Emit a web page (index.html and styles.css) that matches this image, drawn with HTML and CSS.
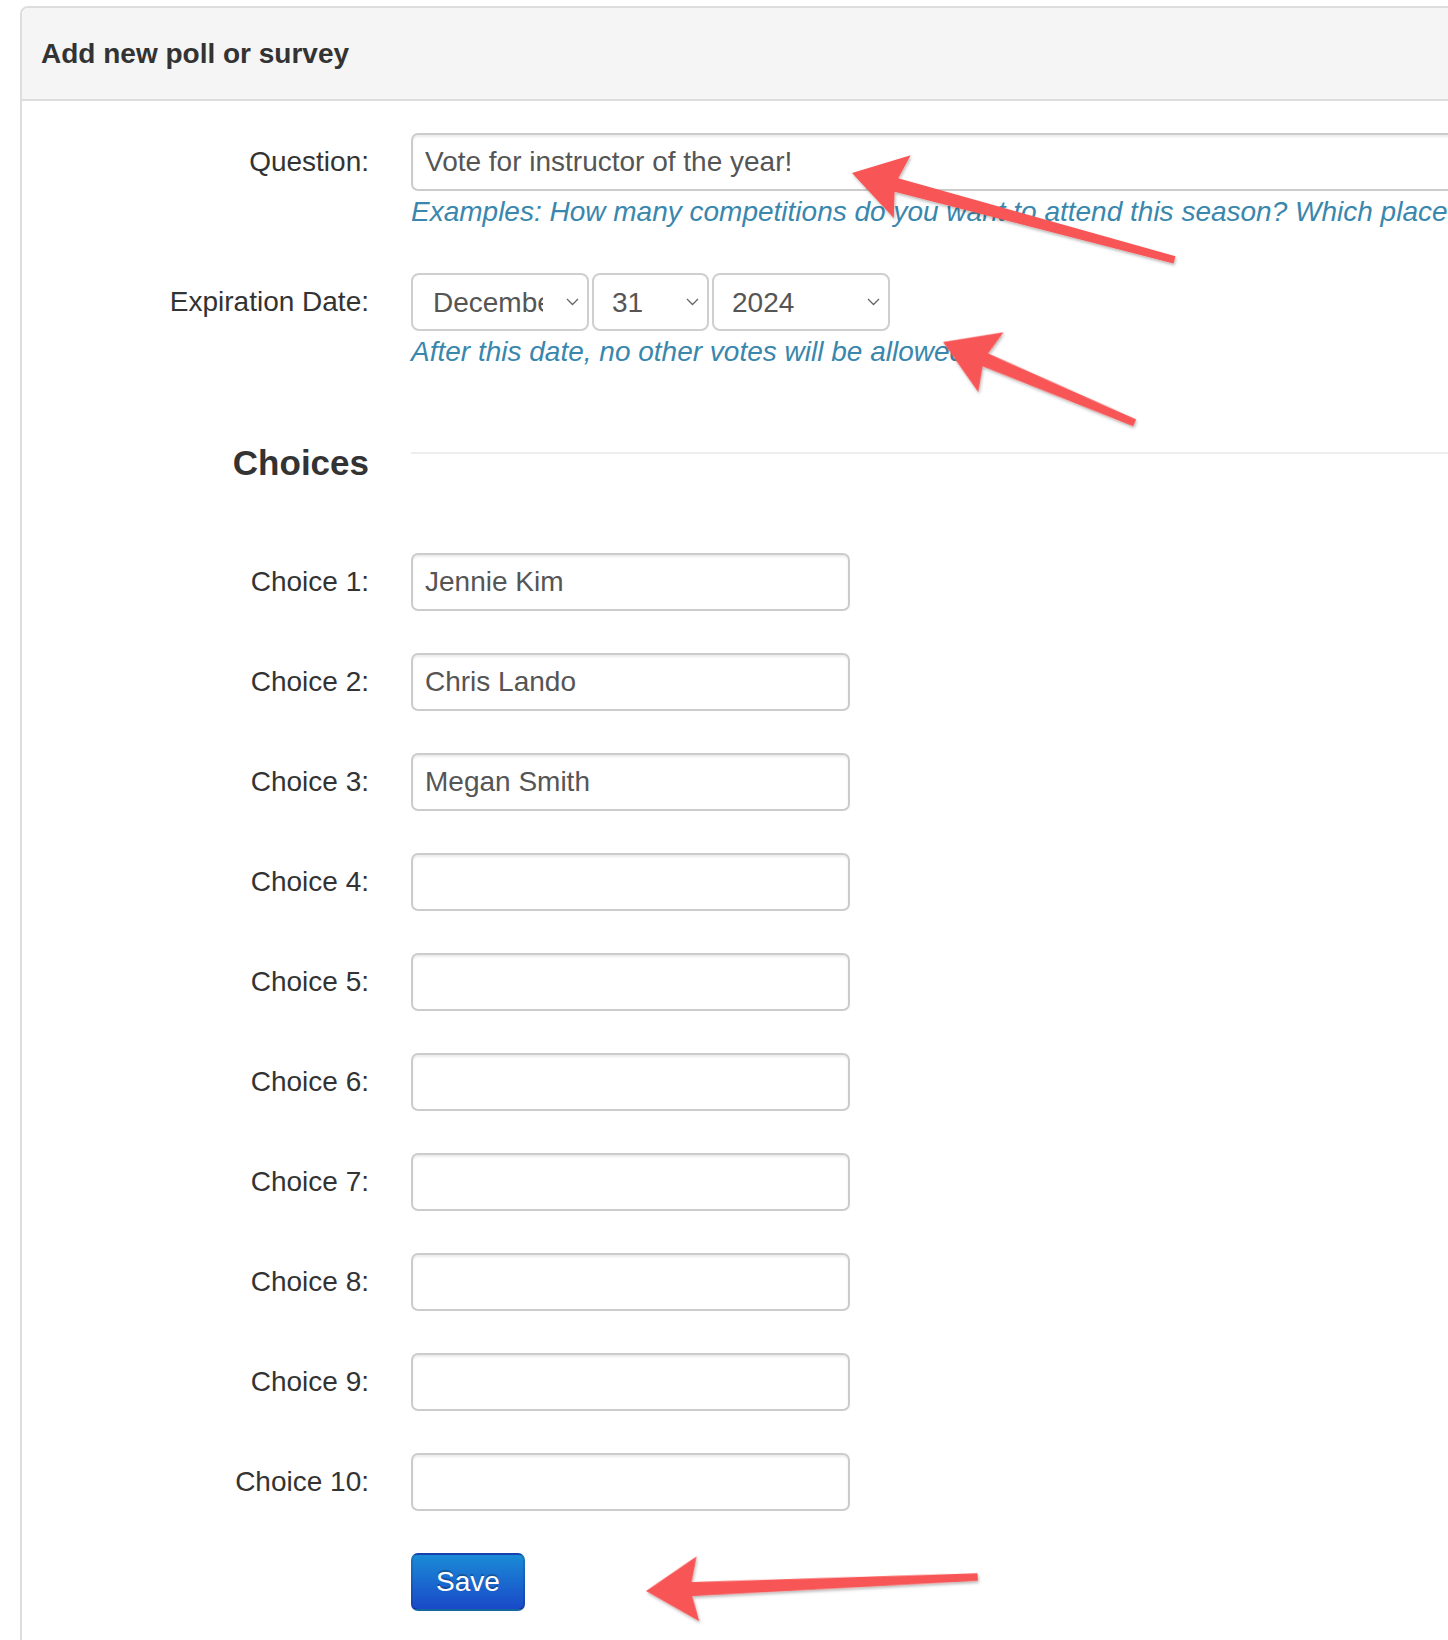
FILE: index.html
```html
<!DOCTYPE html>
<html lang="en">
<head>
    <meta charset="UTF-8">
    <meta name="viewport" content="width=device-width, initial-scale=1.0">
    <title>Add new poll or survey</title>
    <link rel="stylesheet" href="styles.css">
</head>
<body>

    <div class="page">
        <div class="panel">
            <div class="panel-heading">Add new poll or survey</div>

            <form class="panel-body" onsubmit="return false;">
                <div class="form-row field-group">
                    <label class="control-label" for="question">Question:</label>
                    <div class="controls">
                        <input type="text" id="question" class="input-full" value="Vote for instructor of the year!">
                        <p class="help">Examples: How many competitions do you want to attend this season? Which place should we travel to next?</p>
                    </div>
                </div>

                <div class="form-row expiry-group">
                    <label class="control-label" for="exp-month">Expiration Date:</label>
                    <div class="controls">
                        <div class="date-selects">
                            <div class="select-wrap month">
                                <select id="exp-month">
                                    <option>December</option>
                                </select>
                                <svg class="chevron" width="13" height="8" viewBox="0 0 13 8"><path d="M1 1 L6.5 6.5 L12 1" /></svg>
                            </div>
                            <div class="select-wrap day">
                                <select id="exp-day">
                                    <option>31</option>
                                </select>
                                <svg class="chevron" width="13" height="8" viewBox="0 0 13 8"><path d="M1 1 L6.5 6.5 L12 1" /></svg>
                            </div>
                            <div class="select-wrap year">
                                <select id="exp-year">
                                    <option>2024</option>
                                </select>
                                <svg class="chevron" width="13" height="8" viewBox="0 0 13 8"><path d="M1 1 L6.5 6.5 L12 1" /></svg>
                            </div>
                        </div>
                        <p class="help">After this date, no other votes will be allowed.</p>
                    </div>
                </div>

                <div class="form-row section-row">
                    <h4 class="section-title">Choices</h4>
                    <div class="controls">
                        <hr class="section-rule">
                    </div>
                </div>

                <div class="form-row choice-row">
                    <label class="control-label" for="choice-1">Choice 1:</label>
                    <div class="controls"><input type="text" id="choice-1" class="input-choice" value="Jennie Kim"></div>
                </div>
                <div class="form-row choice-row">
                    <label class="control-label" for="choice-2">Choice 2:</label>
                    <div class="controls"><input type="text" id="choice-2" class="input-choice" value="Chris Lando"></div>
                </div>
                <div class="form-row choice-row">
                    <label class="control-label" for="choice-3">Choice 3:</label>
                    <div class="controls"><input type="text" id="choice-3" class="input-choice" value="Megan Smith"></div>
                </div>
                <div class="form-row choice-row">
                    <label class="control-label" for="choice-4">Choice 4:</label>
                    <div class="controls"><input type="text" id="choice-4" class="input-choice"></div>
                </div>
                <div class="form-row choice-row">
                    <label class="control-label" for="choice-5">Choice 5:</label>
                    <div class="controls"><input type="text" id="choice-5" class="input-choice"></div>
                </div>
                <div class="form-row choice-row">
                    <label class="control-label" for="choice-6">Choice 6:</label>
                    <div class="controls"><input type="text" id="choice-6" class="input-choice"></div>
                </div>
                <div class="form-row choice-row">
                    <label class="control-label" for="choice-7">Choice 7:</label>
                    <div class="controls"><input type="text" id="choice-7" class="input-choice"></div>
                </div>
                <div class="form-row choice-row">
                    <label class="control-label" for="choice-8">Choice 8:</label>
                    <div class="controls"><input type="text" id="choice-8" class="input-choice"></div>
                </div>
                <div class="form-row choice-row">
                    <label class="control-label" for="choice-9">Choice 9:</label>
                    <div class="controls"><input type="text" id="choice-9" class="input-choice"></div>
                </div>
                <div class="form-row choice-row">
                    <label class="control-label" for="choice-10">Choice 10:</label>
                    <div class="controls"><input type="text" id="choice-10" class="input-choice"></div>
                </div>

                <div class="form-row actions">
                    <div class="controls">
                        <button type="submit" class="btn-primary">Save</button>
                    </div>
                </div>
            </form>
        </div>

        <!-- annotation arrows drawn over the screenshot -->
        <svg class="annotations" width="1448" height="1640" viewBox="0 0 1448 1640">
            <defs>
                <filter id="arrow-shadow" x="-20%" y="-20%" width="140%" height="160%">
                    <feDropShadow dx="1" dy="2" stdDeviation="1.5" flood-color="#000" flood-opacity="0.28" />
                </filter>
            </defs>
            <g class="arrow" filter="url(#arrow-shadow)">
                <polygon transform="translate(852 173) rotate(15.07)" points="0,0 52,-32.5 46,-7 334,-3.8 334,3.8 46,7 52,32.5" />
                <polygon transform="translate(943 342) rotate(22.87)" points="0,0 52,-32.5 46,-7 208,-3.8 208,3.8 46,7 52,32.5" />
                <polygon transform="translate(646 1591) rotate(-2.41)" points="0,0 52,-32.5 46,-7 332,-3.8 332,3.8 46,7 52,32.5" />
            </g>
        </svg>
    </div>

</body>
</html>
```

FILE: styles.css
```css
html, body {
    margin: 0;
    padding: 0;
    overflow: hidden;
}

body {
    font-family: 'Liberation Sans', Arial, Helvetica, sans-serif;
    font-size: 28px;
    line-height: 40px;
    color: #333;
    background-color: #fff;
}

.page {
    position: relative;
    width: 1448px;
    height: 1640px;
    overflow: hidden;
}

.panel {
    margin: 6px -300px 0 20px;
    min-height: 1800px;
    border: 2px solid #ddd;
    border-radius: 8px;
}

.panel-heading {
    padding: 26px 20px 25px 19px;
    background-color: #f5f5f5;
    border-bottom: 2px solid #ddd;
    border-radius: 6px 6px 0 0;
    font-weight: bold;
}

.panel-body {
    margin: 0;
    padding: 32px 0 0 27px;
}

.form-row {
    display: grid;
    grid-template-columns: 320px 1fr;
    column-gap: 42px;
}

.field-group {
    margin-bottom: 41px;
}

.expiry-group {
    margin-bottom: 71px;
}

.section-row {
    margin-bottom: 70px;
}

.choice-row {
    margin-bottom: 42px;
}

.control-label {
    text-align: right;
    padding-top: 9px;
}

.controls {
    min-width: 0;
}

.actions .controls {
    grid-column: 2;
}

input[type="text"], select {
    box-sizing: border-box;
    height: 58px;
    margin: 0;
    font-family: inherit;
    font-size: 28px;
    color: #555;
    background-color: #fff;
    border: 2px solid #ccc;
    border-radius: 7px;
}

input[type="text"] {
    display: block;
    padding: 0 12px;
    box-shadow: inset 0 2px 2px rgba(0, 0, 0, 0.075);
}

.input-full {
    width: 100%;
}

.input-choice {
    width: 439px;
}

.help {
    margin: 1px 0 0;
    color: #3a87ad;
    font-style: italic;
    white-space: nowrap;
}

.date-selects {
    display: flex;
    gap: 3px;
}

.select-wrap {
    position: relative;
}

.select-wrap select {
    width: 100%;
    padding: 0 44px 0 20px;
    -webkit-appearance: none;
    appearance: none;
    border-color: #cfcfcf;
    border-radius: 8px;
}

.select-wrap.month { width: 178px; }
.select-wrap.day { width: 117px; }
.select-wrap.year { width: 178px; }

.day select, .year select {
    padding-left: 18px;
}

.chevron {
    position: absolute;
    right: 10px;
    top: 25px;
    fill: none;
    stroke: #666;
    stroke-width: 1.3;
}

.section-title {
    margin: 0;
    font-size: 35px;
    line-height: 40px;
    font-weight: bold;
    text-align: right;
}

.section-rule {
    margin: 9px 0 0;
    border: 0;
    border-top: 2px solid #eee;
}

.btn-primary {
    box-sizing: border-box;
    height: 58px;
    padding: 0 23px;
    font-family: inherit;
    font-size: 28px;
    color: #fff;
    text-shadow: 0 -2px 0 rgba(0, 0, 0, 0.25);
    background-color: #1a63cf;
    background-image: linear-gradient(to bottom, #1a8bd6, #1a49c8);
    border: 2px solid rgba(0, 0, 0, 0.12);
    border-bottom-color: rgba(0, 0, 0, 0.25);
    border-radius: 7px;
    cursor: pointer;
}

.annotations {
    position: absolute;
    top: 0;
    left: 0;
    pointer-events: none;
}

.arrow {
    fill: #f85656;
}
```
